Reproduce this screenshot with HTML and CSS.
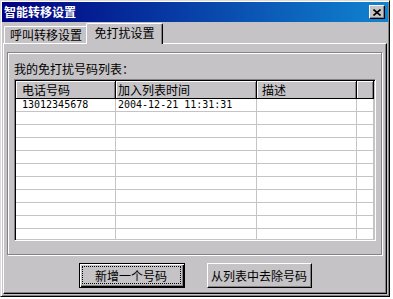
FILE: index.html
```html
<!DOCTYPE html>
<html lang="zh-CN">
<head>
  <meta charset="UTF-8">
  <title>智能转移设置</title>
  <link rel="stylesheet" href="styles.css">
</head>
<body>

  <div class="dialog">
    <div class="titlebar">
      <span class="title">智能转移设置</span>
      <span class="close">
        <svg width="8" height="7" viewBox="0 0 8 7">
          <path d="M0.5 0.5 L7.5 6.5 M7.5 0.5 L0.5 6.5" stroke="#000" stroke-width="1.6" fill="none"/>
        </svg>
      </span>
    </div>

    <div class="tabs">
      <div class="tab">呼叫转移设置</div>
      <div class="tab active">免打扰设置</div>
    </div>

    <div class="panel">
      <div class="frame">
        <div class="label">我的免打扰号码列表：</div>
        <div class="list">
          <div class="row head">
            <div class="c1">电话号码</div>
            <div class="c2">加入列表时间</div>
            <div class="c3">描述</div>
            <div class="c4"></div>
          </div>
          <div class="row">
            <div class="c1 num">13012345678</div>
            <div class="c2 num">2004-12-21 11:31:31</div>
            <div class="c3"></div>
            <div class="c4"></div>
          </div>
          <div class="row"><div class="c1"></div><div class="c2"></div><div class="c3"></div><div class="c4"></div></div>
          <div class="row"><div class="c1"></div><div class="c2"></div><div class="c3"></div><div class="c4"></div></div>
          <div class="row"><div class="c1"></div><div class="c2"></div><div class="c3"></div><div class="c4"></div></div>
          <div class="row"><div class="c1"></div><div class="c2"></div><div class="c3"></div><div class="c4"></div></div>
          <div class="row"><div class="c1"></div><div class="c2"></div><div class="c3"></div><div class="c4"></div></div>
          <div class="row"><div class="c1"></div><div class="c2"></div><div class="c3"></div><div class="c4"></div></div>
          <div class="row"><div class="c1"></div><div class="c2"></div><div class="c3"></div><div class="c4"></div></div>
          <div class="row"><div class="c1"></div><div class="c2"></div><div class="c3"></div><div class="c4"></div></div>
          <div class="row"><div class="c1"></div><div class="c2"></div><div class="c3"></div><div class="c4"></div></div>
          <div class="row"><div class="c1"></div><div class="c2"></div><div class="c3"></div><div class="c4"></div></div>
        </div>
      </div>

      <div class="buttons">
        <button class="btn default"><span>新增一个号码</span></button>
        <button class="btn"><span>从列表中去除号码</span></button>
      </div>
    </div>
  </div>

</body>
</html>
```

FILE: styles.css
```css
* {
  box-sizing: border-box;
}
body {
  margin: 0;
  background: #fff;
  font-family: "Noto Sans CJK SC", sans-serif;
  font-size: 12px;
  color: #000;
}
.dialog {
  width: 390px;
  height: 297px;
  background: #c6c3c6;
  border: 1px solid;
  border-color: #dedbde #000 #000 #dedbde;
  box-shadow: inset 1px 1px 0 #fff, inset -1px -1px 0 #848284;
  padding: 1px;
  display: flex;
  flex-direction: column;
}
.titlebar {
  height: 20px;
  background: linear-gradient(90deg, #000080, #1084d0);
  display: flex;
  align-items: center;
  justify-content: space-between;
  padding: 0 3px 0 2px;
  color: #fff;
}
.title {
  font-weight: bold;
  line-height: 14px;
}
.close {
  width: 16px;
  height: 14px;
  background: #c6c3c6;
  border: 1px solid;
  border-color: #fff #000 #000 #fff;
  box-shadow: inset -1px -1px 0 #848284;
  display: flex;
  align-items: center;
  justify-content: center;
}
.tabs {
  height: 21px;
  display: flex;
  align-items: flex-end;
  padding-left: 2px;
}
.tab {
  height: 17px;
  width: 84px;
  line-height: 15px;
  text-align: center;
  border-top: 1px solid #fff;
  border-left: 1px solid #fff;
  border-right: 1px solid #000;
  border-radius: 2px 2px 0 0;
  box-shadow: inset -1px 0 0 #848284;
  background: #c6c3c6;
}
.tab.active {
  position: relative;
  z-index: 1;
  height: 21px;
  width: 77px;
  margin-left: -2px;
  margin-bottom: -1px;
  line-height: 18px;
}
.panel {
  flex: 1;
  margin: 0 1px 1px 1px;
  border: 1px solid;
  border-color: #fff #000 #000 #fff;
  box-shadow: inset -1px -1px 0 #848284;
  display: flex;
  flex-direction: column;
}
.frame {
  height: 203px;
  margin: 8px 4px 0 3px;
  border: 1px solid #848284;
  box-shadow: 1px 1px 0 #fff, inset 1px 1px 0 #fff;
  padding: 0 0 0 6px;
}
.label {
  height: 14px;
  line-height: 14px;
  margin-top: 9px;
}
.list {
  height: 162px;
  width: 362px;
  margin-top: 3px;
  background: #fff;
  border: 1px solid;
  border-color: #848284 #fff #fff #848284;
  box-shadow: inset 1px 1px 0 #000, inset -1px -1px 0 #c6c3c6;
  padding: 1px;
  overflow: hidden;
}
.row {
  display: flex;
  height: 13px;
  border-bottom: 1px solid #c6c3c6;
}
.row > div {
  border-right: 1px solid #c6c3c6;
  line-height: 12px;
  white-space: nowrap;
  overflow: hidden;
}
.c1 {
  width: 100px;
  padding-left: 6px;
}
.c2 {
  width: 141px;
  padding-left: 2px;
}
.c3 {
  width: 100px;
  padding-left: 5px;
}
.c4 {
  flex: 1;
}
.row.head {
  height: 18px;
  border-bottom: 1px solid #000;
  background: #c6c3c6;
}
.row.head > div {
  border-right: 1px solid #000;
  box-shadow: inset 1px 1px 0 #fff, inset -1px 0 0 #848284;
  line-height: 17px;
}
.num {
  font-family: "DejaVu Sans Mono", monospace;
  font-size: 10px;
}
.buttons {
  display: flex;
  justify-content: center;
  gap: 22px;
  margin-top: 8px;
}
.btn {
  height: 25px;
  width: 105px;
  padding: 0;
  background: #c6c3c6;
  font-family: "Noto Sans CJK SC", sans-serif;
  font-size: 12px;
  color: #000;
  border: 1px solid;
  border-color: #fff #000 #000 #fff;
  box-shadow: inset -1px -1px 0 #848284;
  display: flex;
  align-items: center;
  justify-content: center;
}
.btn.default {
  width: 106px;
  border-color: #000;
  box-shadow: inset 1px 1px 0 #fff, inset -1px -1px 0 #000, inset -2px -2px 0 #848284;
  align-items: stretch;
}
.btn.default span {
  flex: 1;
  margin: 2px 3px 3px 2px;
  border: 1px dotted #000;
  display: flex;
  align-items: center;
  justify-content: center;
}
```
